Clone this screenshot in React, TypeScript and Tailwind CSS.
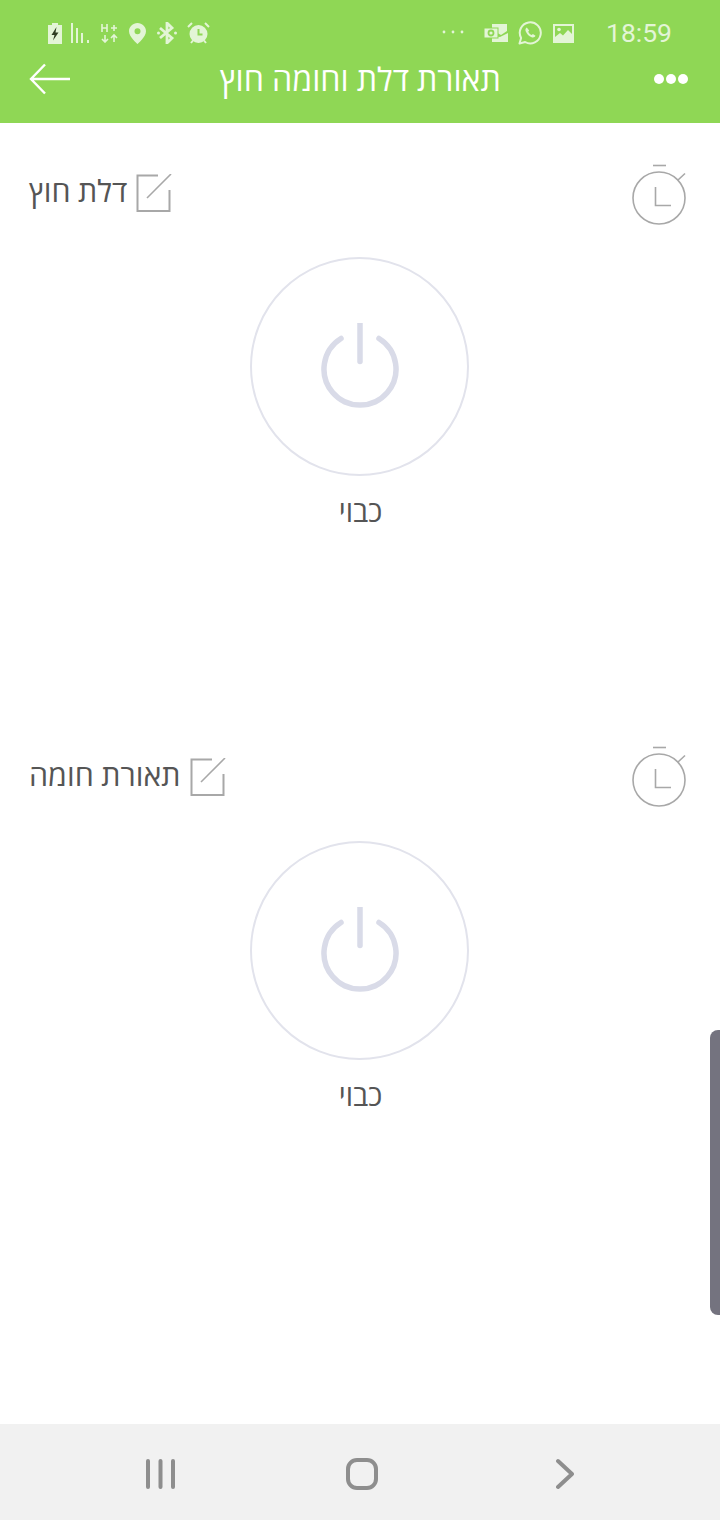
import React from 'react';

const FONT = "font-['Roboto','Open_Sans','Liberation_Sans',sans-serif]";

const SWITCHES = [
    { id: 1, name: 'דלת חוץ', timerShift: '' },
    { id: 2, name: 'תאורת חומה', timerShift: '-mt-[4px]' },
];

function StatusLeft() {
    return (
        <div className="flex items-center text-[#e3f5d6]">
            {/* battery */}
            <svg width="14" height="21" viewBox="0 0 14 21" className="ml-[48px]">
                <path d="M4 0h6v2h4v19H0V2h4z" fill="currentColor" />
                <path d="M8.500 4 3.500 12h3l-1.500 5.500L10.500 9.500h-3z" fill="#2f3d22" />
            </svg>
            {/* signal */}
            <svg width="20" height="20" viewBox="0 0 20 20" className="ml-[9px]" fill="currentColor">
                <rect x="0" y="0" width="2" height="20" />
                <rect x="5" y="5" width="2" height="15" />
                <rect x="10" y="10" width="2" height="10" />
                <rect x="16" y="17" width="2" height="3" />
            </svg>
            {/* H+ */}
            <svg width="17" height="20" viewBox="0 0 17 20" className="ml-[10px]" stroke="currentColor" strokeWidth="1.600" fill="none">
                <path d="M1 1v8M6 1v8M1 5h5M10 5h6M13 2v6" />
                <path d="M4 12v7M1 16l3 3 3-3M13 19v-7M10 15l3-3 3 3" />
            </svg>
            {/* location */}
            <svg width="17" height="21" viewBox="0 0 17 21" className="ml-[11px]">
                <path fillRule="evenodd" d="M8.500 0C3.800 0 0 3.700 0 8.300 0 14 8.500 21 8.500 21S17 14 17 8.300C17 3.700 13.200 0 8.500 0zm0 5.300a3 3 0 1 1 0 6 3 3 0 0 1 0-6z" fill="currentColor" />
            </svg>
            {/* bluetooth */}
            <svg width="20" height="22" viewBox="0 0 20 22" className="ml-[11px]" fill="none" stroke="currentColor" strokeWidth="2.800">
                <path d="M3 6l12 10-5 5V1l5 5L3 16" />
                <circle cx="1.500" cy="11" r="1.500" fill="currentColor" stroke="none" />
                <circle cx="18.500" cy="11" r="1.500" fill="currentColor" stroke="none" />
            </svg>
            {/* alarm */}
            <svg width="23" height="22" viewBox="0 0 23 22" className="ml-[10px]">
                <circle cx="11.500" cy="12" r="9" fill="currentColor" />
                <path d="M11.500 7v5.500h4" stroke="#8fd755" strokeWidth="2" fill="none" />
                <path d="M1 5l4-4M22 5l-4-4M4 21l2-2.500M19 21l-2-2.500" stroke="currentColor" strokeWidth="2" fill="none" />
            </svg>
        </div>
    );
}

function StatusRight() {
    return (
        <div className="flex items-center text-[#e3f5d6]">
            <svg width="22" height="4" viewBox="0 0 22 4" fill="currentColor" className="-mt-[2px]">
                <circle cx="2" cy="2" r="1.400" />
                <circle cx="11" cy="2" r="1.400" />
                <circle cx="20" cy="2" r="1.400" />
            </svg>
            {/* outlook */}
            <svg width="24" height="18" viewBox="0 0 24 18" className="ml-[20px]">
                <path d="M8 0h15v7l-6 4-9-5z" fill="currentColor" />
                <path d="M8 12l8 1 8-4v9H8z" fill="currentColor" />
                <rect x="0" y="4" width="14" height="10" fill="currentColor" stroke="#8fd755" strokeWidth="1" />
                <circle cx="7" cy="9" r="2.500" fill="none" stroke="#8fd755" strokeWidth="1.800" />
            </svg>
            {/* whatsapp */}
            <svg width="24" height="24" viewBox="0 0 24 24" className="ml-[10px]">
                <path d="M1.500 22.500l1.600-5.600A10.500 10.500 0 1 1 7.200 21z" fill="none" stroke="currentColor" strokeWidth="2" strokeLinejoin="round" />
                <path d="M8.800 6.500c-1.300.8-1.800 2.200-1 4.100 1.100 2.700 3 4.500 5.800 5.600 1.900.6 3.300 0 3.900-1.500l-2.600-1.700-1.200 1.100c-1.600-.7-2.800-1.900-3.500-3.400l1-1.300z" fill="currentColor" />
            </svg>
            {/* gallery */}
            <svg width="21" height="19" viewBox="0 0 21 19" className="ml-[11px]">
                <path fillRule="evenodd" d="M0 0h21v19H0zM2 2v11l5-4 3 2.500L15 6l4 4V2z" fill="currentColor" />
                <circle cx="6" cy="5.500" r="1.800" fill="currentColor" />
            </svg>
            <span className="ml-[32px] mr-[48px] text-[26.500px] leading-none">18:59</span>
        </div>
    );
}

function TimerIcon() {
    return (
        <svg width="56" height="62" viewBox="0 0 56 62" fill="none" stroke="#a8a8a8" strokeWidth="1.600">
            <path d="M22 1.500h13" />
            <circle cx="28" cy="34" r="26" />
            <path d="M47 16l7-6.500" />
            <path d="M24.500 23v18.500H40" />
        </svg>
    );
}

function EditIcon() {
    return (
        <svg width="36" height="38" viewBox="0 0 36 38" fill="none" stroke="#a8a8a8" strokeWidth="2" className="mt-[3px]">
            <path d="M22 1.500H1.500V37h32V16" />
            <path d="M11 24L35 0" strokeWidth="1.600" />
        </svg>
    );
}

function SwitchBlock({ name, timerShift }: { name: string; timerShift: string }) {
    return (
        <section className="h-[584px] pt-[40px]">
            <div className="flex items-center justify-between h-[64px] pl-[29px] pr-[33px]">
                <div className="flex items-center gap-[9px] -mt-[8px]">
                    <span className="mt-[2px] text-[30.400px] leading-none text-[#555555]">{name}</span>
                    <EditIcon />
                </div>
                <div className={timerShift}>
                    <TimerIcon />
                </div>
            </div>
            <div className="flex flex-col items-center mt-[30px] -ml-[2px]">
                <button className="w-[219px] h-[219px] rounded-full border-2 border-[#e2e3ec] flex items-center justify-center">
                    <svg width="80" height="88" viewBox="-1 2.500 80 88" fill="none" stroke="#d9dbe8" strokeWidth="5.500" strokeLinecap="round">
                        <path d="M40 3v38" />
                        <path d="M21 18a36 36 0 1 0 38 0" />
                    </svg>
                </button>
                <span className="mt-[19px] ml-[3px] text-[29px] leading-[34px] text-[#555555]">כבוי</span>
            </div>
        </section>
    );
}

export default function App() {
    return (
        <div className={`relative w-[720px] h-[1520px] flex flex-col bg-white overflow-hidden ${FONT}`}>
            {/* green app bar with the system status row */}
            <header className="h-[123px] shrink-0 bg-[#8fd755] text-white">
                <div className="flex items-center justify-between h-[66px]">
                    <StatusLeft />
                    <StatusRight />
                </div>
                <div className="flex items-center justify-between h-[26px] pl-[29px] pr-[32px]">
                    <svg width="41" height="32" viewBox="0 0 41 32" fill="none" stroke="currentColor" strokeWidth="2.400">
                        <path d="M41 16H2M16 1.500L2 16l14 14.500" />
                    </svg>
                    <span dir="rtl" className="mr-[3px] mt-[2px] text-[32.200px] leading-none">תאורת דלת וחומה חוץ</span>
                    <div className="flex gap-[2px]">
                        <span className="w-[10px] h-[10px] rounded-full bg-white" />
                        <span className="w-[10px] h-[10px] rounded-full bg-white" />
                        <span className="w-[10px] h-[10px] rounded-full bg-white" />
                    </div>
                </div>
            </header>

            <main className="flex-1 min-h-0">
                {SWITCHES.map((s) => (
                    <SwitchBlock key={s.id} name={s.name} timerShift={s.timerShift} />
                ))}
            </main>

            {/* edge panel handle */}
            <div className="absolute right-0 top-[1030px] w-[10px] h-[285px] rounded-l-[8px] bg-[#74737f]" />

            {/* android nav bar */}
            <nav className="h-[96px] shrink-0 bg-[#f1f1f1] flex items-center pl-[146px] pt-[4px]">
                <svg width="30" height="32" viewBox="0 0 30 32" stroke="#8e8e8e" strokeWidth="4" strokeLinecap="round">
                    <path d="M2 3v26M14.500 3v26M27 3v26" />
                </svg>
                <svg width="32" height="32" viewBox="0 0 32 32" fill="none" stroke="#8e8e8e" strokeWidth="4" className="ml-[170px]">
                    <rect x="2" y="2" width="28" height="28" rx="9" />
                </svg>
                <svg width="18" height="32" viewBox="0 0 18 32" fill="none" stroke="#8e8e8e" strokeWidth="4" strokeLinecap="round" strokeLinejoin="round" className="ml-[178px]">
                    <path d="M2 3l14 13L2 29" />
                </svg>
            </nav>
        </div>
    );
}
